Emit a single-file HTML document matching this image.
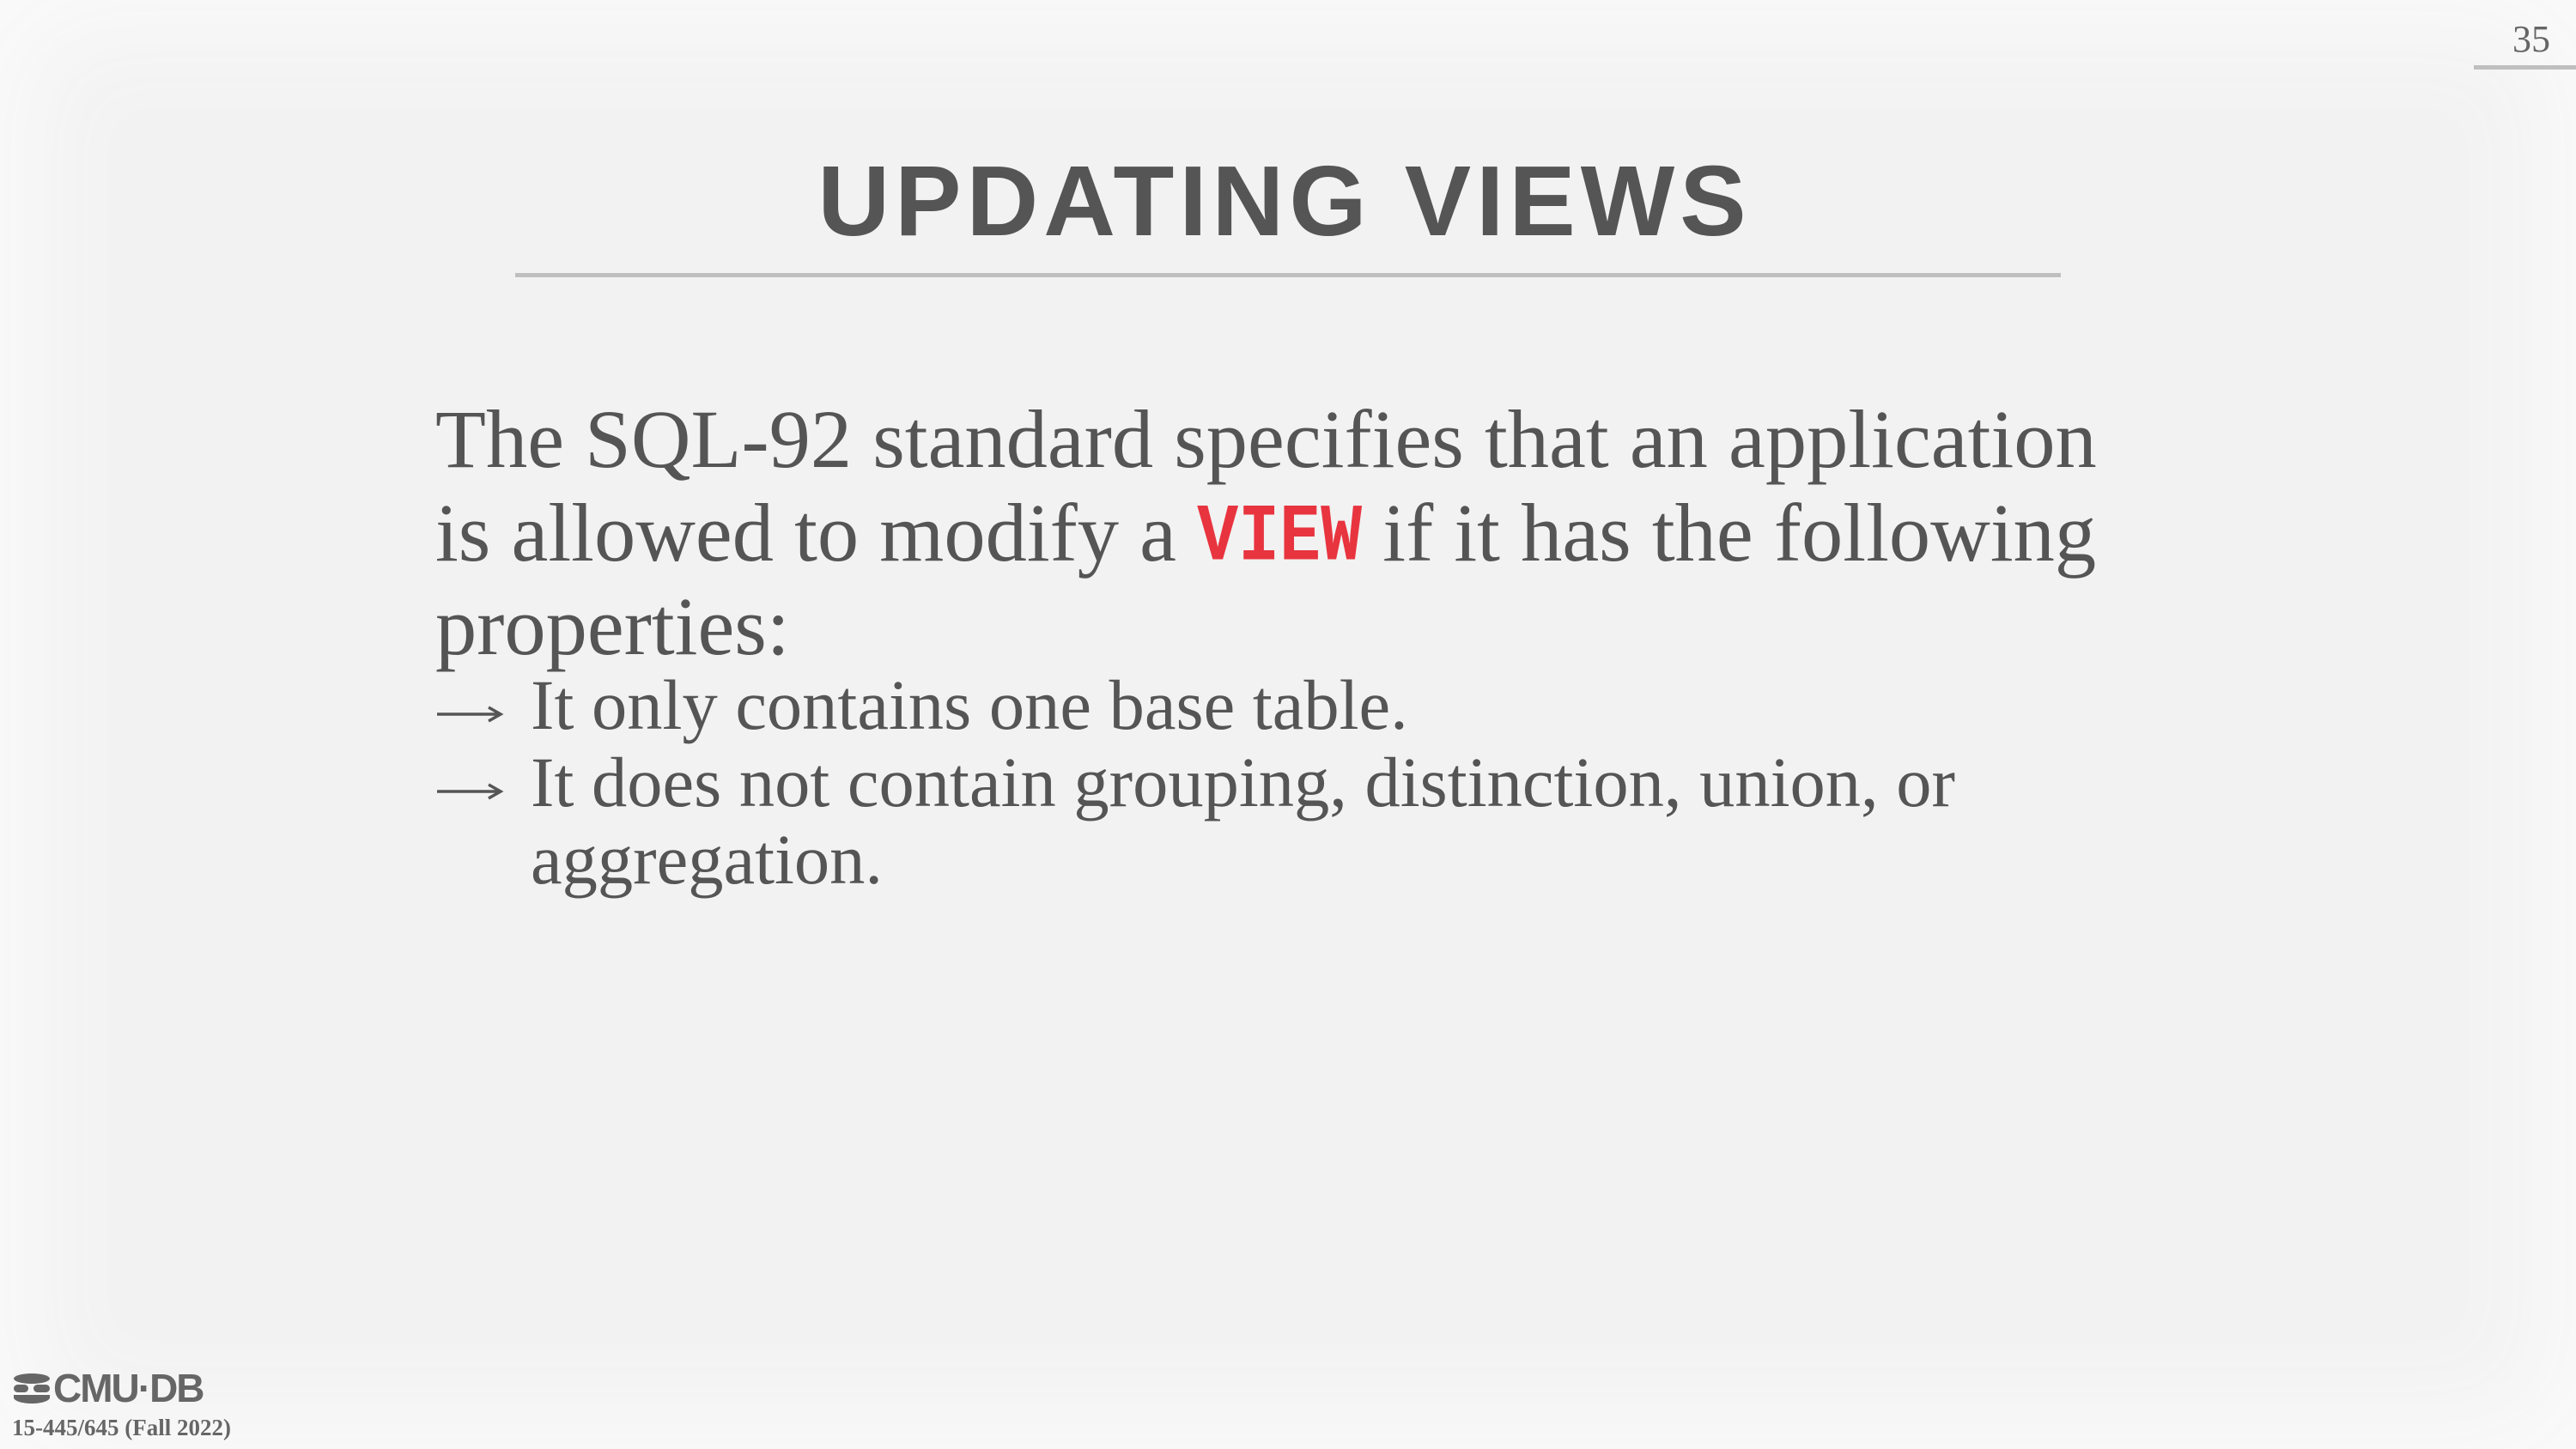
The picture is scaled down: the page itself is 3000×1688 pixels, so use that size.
<!DOCTYPE html>
<html><head><meta charset="utf-8"><style>
html,body{margin:0;padding:0}
body{width:3000px;height:1688px;overflow:hidden;position:relative;background:#f2f2f2;color:#555;}
.vig{position:absolute;inset:0;box-shadow:inset 0 0 120px 40px #fafafa;}
.t{position:absolute;white-space:nowrap;line-height:1;}
.title{font-family:"Liberation Sans",sans-serif;font-weight:bold;font-size:116px;letter-spacing:6px;left:0;width:3000px;text-align:center;top:176px;text-indent:-8px;color:#555}
.ser{font-family:"Liberation Serif",serif;}
.b{font-size:96.5px;left:507px;}
.s{font-size:82.5px;}
.v{display:inline-block;font-family:"Liberation Mono",monospace;font-weight:bold;color:#e8343f;font-size:80px;transform:scaleY(1.18);transform-origin:50% 85%;}
</style></head><body>
<div class="vig"></div>
<div class="t title">UPDATING VIEWS</div>
<div style="position:absolute;left:600px;top:318px;width:1800px;height:5px;background:#bfbfbf"></div>
<div class="t ser" style="font-size:44px;top:24px;right:30px;color:#666">35</div>
<div style="position:absolute;left:2881px;top:76px;width:119px;height:5px;background:#bfbfbf"></div>

<div class="t ser b" style="top:464px">The SQL-92 standard specifies that an application</div>
<div class="t ser b" style="top:573px">is allowed to modify a <span class="v">VIEW</span> if it has the following</div>
<div class="t ser b" style="top:682px">properties:</div>
<svg style="position:absolute;left:507px;top:820px" width="80" height="24" viewBox="0 0 80 24"><path d="M2 12H74M62 4L76 12L62 20" fill="none" stroke="#555" stroke-width="3.5"/></svg>
<div class="t ser s" style="top:780px;left:618px">It only contains one base table.</div>
<svg style="position:absolute;left:507px;top:910px" width="80" height="24" viewBox="0 0 80 24"><path d="M2 12H74M62 4L76 12L62 20" fill="none" stroke="#555" stroke-width="3.5"/></svg>
<div class="t ser s" style="top:870px;left:618px">It does not contain grouping, distinction, union, or</div>
<div class="t ser s" style="top:960px;left:618px">aggregation.</div>

<svg style="position:absolute;left:14px;top:1600px" width="46" height="36" viewBox="0 0 46 36">
<g fill="#666">
<ellipse cx="23" cy="6" rx="21" ry="6"/>
<rect x="2" y="13" width="17" height="9" rx="4.5"/><rect x="25" y="13" width="19" height="9" rx="4.5"/>
<path d="M2 25h42v3c0 4-10 7-21 7S2 32 2 28z"/>
</g></svg>
<div class="t" style="font-family:'Liberation Sans',sans-serif;font-weight:bold;font-size:46px;top:1594px;left:62px;color:#666;letter-spacing:-2px">CMU·DB</div>
<div class="t ser" style="font-size:27px;top:1650px;left:14px;color:#666;font-weight:bold">15-445/645 (Fall 2022)</div>
</body></html>
